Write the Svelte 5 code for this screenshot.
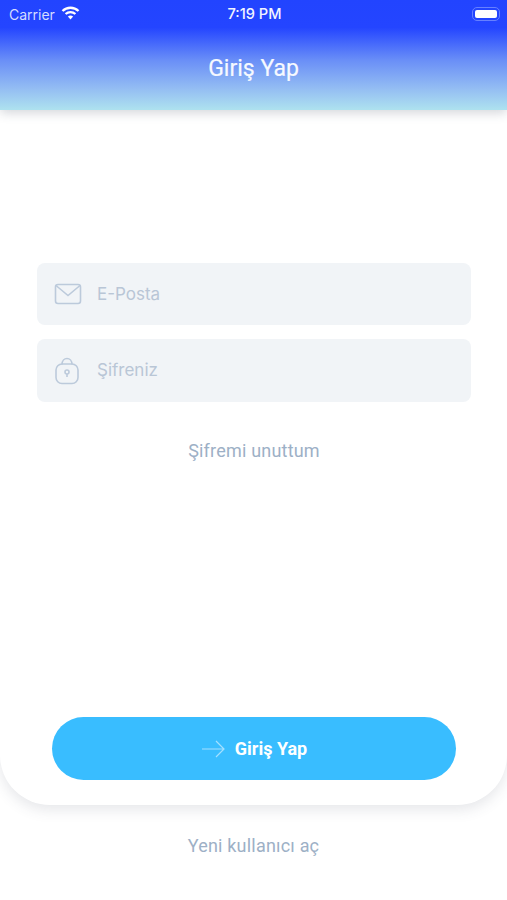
<script>
  let email = '';
  let password = '';
</script>

<main>
  <div class="card">
    <header>
      <div class="status">
        <div class="carrier">
          <span>Carrier</span>
          <svg width="19" height="14" viewBox="0 0 19 14">
            <path d="M1.5 5 A11.5 11.5 0 0 1 17.5 5" fill="none" stroke="#fff" stroke-width="2.3" />
            <path d="M4.6 8 A7.2 7.2 0 0 1 14.4 8" fill="none" stroke="#fff" stroke-width="2.3" />
            <path d="M6.9 10.6 A3.8 3.8 0 0 1 12.1 10.6 L9.5 13.4 Z" fill="#fff" />
          </svg>
        </div>
        <span class="time">7:19 PM</span>
        <div class="battery"><i></i></div>
      </div>
      <h1>Giriş Yap</h1>
    </header>

    <form class="form" on:submit|preventDefault>
      <label class="field">
        <svg class="icon" width="28" height="22" viewBox="0 0 28 22" fill="none">
          <rect x="1.5" y="1.5" width="25" height="19" rx="2.5" />
          <path d="M2 2.5 L14 12.5 L26 2.5" />
        </svg>
        <input type="text" placeholder="E-Posta" bind:value={email} />
      </label>
      <label class="field second">
        <svg class="icon" width="26" height="28" viewBox="0 0 26 28" fill="none">
          <path d="M8 7.5 C8 -0.5 18 -0.5 18 7.5" />
          <rect x="2" y="7" width="22" height="19.5" rx="6" />
          <circle cx="13" cy="15" r="2" />
          <path d="M13 17 V20" />
        </svg>
        <input type="password" placeholder="Şifreniz" bind:value={password} />
      </label>
      <div class="link forgot">Şifremi unuttum</div>
    </form>

    <button class="submit" type="button">
      <svg width="24" height="18" viewBox="0 0 24 18" fill="none">
        <path d="M1 9 H23 M15 1 L23 9 L15 17" />
      </svg>
      <span>Giriş Yap</span>
    </button>
  </div>

  <div class="link signup">Yeni kullanıcı aç</div>
</main>

<style>
  :global(body) {
    margin: 0;
    background: #fff;
  }

  main {
    width: 507px;
    height: 900px;
    overflow: hidden;
    font-family: Roboto, "Liberation Sans", sans-serif;
  }

  .card {
    height: 805px;
    box-sizing: border-box;
    display: flex;
    flex-direction: column;
    background: #fff;
    border-radius: 0 0 50px 50px;
    box-shadow: 0 5px 14px rgba(60, 70, 90, 0.13);
  }

  header {
    height: 110px;
    flex: none;
    background: linear-gradient(to bottom, #2244ff 0%, #2445ff 25%, #6a8ff7 55%, #93bcf3 80%, #aee2ef 100%);
    box-shadow: 0 3px 10px rgba(60, 70, 90, 0.22);
    color: #fff;
  }

  .status {
    height: 28px;
    display: grid;
    grid-template-columns: 1fr auto 1fr;
    align-items: center;
    padding: 0 7px 0 9px;
    font-size: 14px;
    font-family: Inter, Roboto, sans-serif;
  }

  .carrier {
    display: flex;
    align-items: center;
    gap: 6px;
    color: #d5dcff;
  }

  .carrier svg {
    margin-top: -3px;
  }

  .time {
    font-size: 14.6px;
    font-weight: 500;
    color: #f2f4ff;
  }

  .battery {
    justify-self: end;
    width: 28px;
    height: 14px;
    box-sizing: border-box;
    padding: 2px;
    border: 1px solid #6680ff;
    border-radius: 5px;
  }

  .battery i {
    display: block;
    height: 100%;
    background: #fff;
    border-radius: 2px;
  }

  h1 {
    margin: 0;
    padding-top: 27px;
    font-size: 23px;
    line-height: 28px;
    font-weight: 400;
    text-align: center;
    color: #f6f9ff;
    -webkit-text-stroke: 0.2px #f6f9ff;
  }

  .form {
    display: flex;
    flex-direction: column;
    padding: 153px 36px 0 37px;
  }

  .field {
    height: 62px;
    display: flex;
    align-items: center;
    gap: 15px;
    padding-left: 17px;
    background: #f1f4f7;
    border-radius: 8px;
  }

  .second {
    height: 63px;
    margin-top: 14px;
    gap: 17px;
  }

  .second input {
    margin-bottom: 2px;
  }

  .icon {
    flex: none;
  }

  .icon * {
    stroke: #bccadb;
    stroke-width: 1.6;
  }

  input {
    flex: 1;
    min-width: 0;
    padding: 0;
    border: none;
    outline: none;
    background: none;
    font: 400 17px Inter, Roboto, sans-serif;
    color: #5a6b80;
  }

  input::placeholder {
    color: #b9c6d6;
    opacity: 1;
  }

  .link {
    font-size: 18px;
    line-height: 24px;
    text-align: center;
    color: #9db0c6;
    letter-spacing: 0.2px;
  }

  .forgot {
    margin-top: 37px;
  }

  .submit {
    width: 404px;
    height: 63px;
    flex: none;
    margin: auto 0 25px 52px;
    display: flex;
    align-items: center;
    justify-content: center;
    gap: 10px;
    border: none;
    border-radius: 32px;
    background: #39bdff;
    color: #fff;
    font: 700 18px Roboto, sans-serif;
  }

  .submit svg path {
    stroke: #a5e0ff;
    stroke-width: 1.2;
  }

  .signup {
    margin-top: 29px;
  }
</style>
